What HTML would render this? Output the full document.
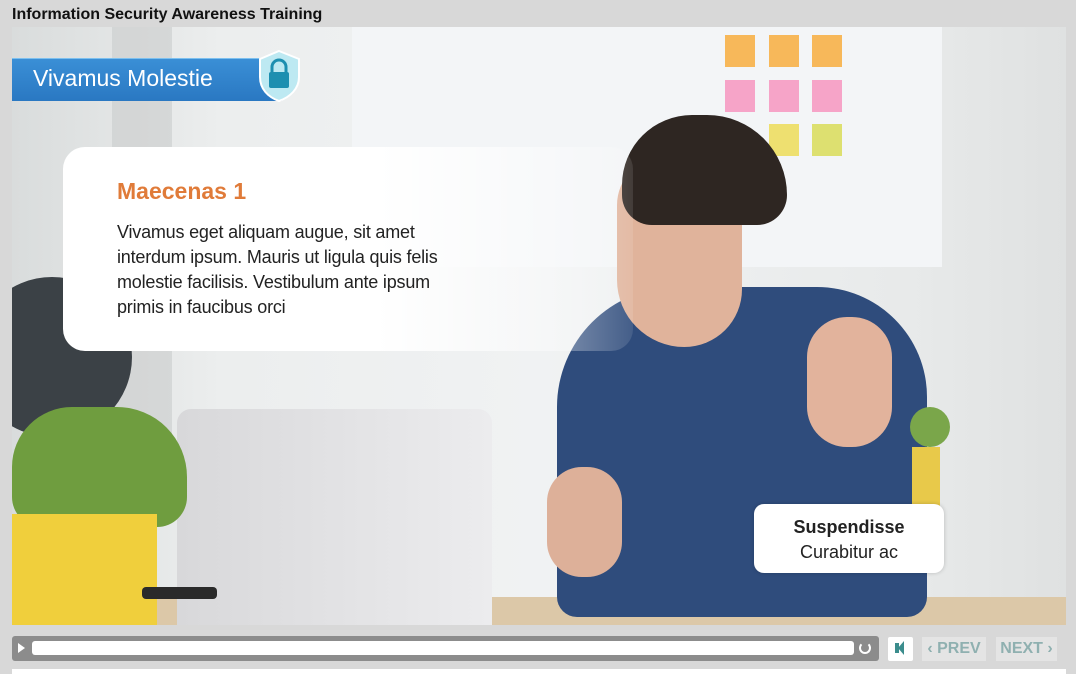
<!DOCTYPE html>
<html><head><style>
*{margin:0;padding:0;box-sizing:border-box}
body{width:1076px;height:674px;background:#d8d8d8;position:relative;overflow:hidden;font-family:"Liberation Sans",sans-serif}
.a{position:absolute}
</style></head><body>
<div class="a" style="left:12px;top:6px;font-size:16px;font-weight:bold;color:#111">Information Security Awareness Training</div>
<div class="a" style="left:12px;top:27px;width:1054px;height:598px;overflow:hidden;background:linear-gradient(90deg,#d9dcdc 0%,#eceeee 20%,#f0f2f3 50%,#e8eaea 85%,#dfe1e1 100%)">
 <div class="a" style="left:340px;top:0;width:590px;height:240px;background:#f3f5f7"></div>
 <div class="a" style="left:100px;top:0;width:60px;height:440px;background:#c9cccc;opacity:.6"></div>
 <div class="a" style="left:713px;top:8px;width:30px;height:32px;background:#f7b85a"></div>
 <div class="a" style="left:757px;top:8px;width:30px;height:32px;background:#f7b85a"></div>
 <div class="a" style="left:800px;top:8px;width:30px;height:32px;background:#f7b85a"></div>
 <div class="a" style="left:713px;top:53px;width:30px;height:32px;background:#f6a4c8"></div>
 <div class="a" style="left:757px;top:53px;width:30px;height:32px;background:#f6a4c8"></div>
 <div class="a" style="left:800px;top:53px;width:30px;height:32px;background:#f6a4c8"></div>
 <div class="a" style="left:757px;top:97px;width:30px;height:32px;background:#eee070"></div>
 <div class="a" style="left:800px;top:97px;width:30px;height:32px;background:#dde070"></div>
 <div class="a" style="left:-40px;top:250px;width:160px;height:160px;border-radius:50%;background:#3b4146"></div>
 <div class="a" style="left:0;top:570px;width:1054px;height:28px;background:#dcc8a8"></div>
 <div class="a" style="left:545px;top:260px;width:370px;height:330px;background:#2f4c7c;border-radius:120px 110px 20px 20px"></div>
 <div class="a" style="left:795px;top:290px;width:85px;height:130px;background:#e2b39c;border-radius:40px"></div>
 <div class="a" style="left:535px;top:440px;width:75px;height:110px;background:#ddb099;border-radius:35px"></div>
 <div class="a" style="left:605px;top:130px;width:125px;height:190px;background:#e0b39b;border-radius:50px 60px 60px 70px"></div>
 <div class="a" style="left:610px;top:88px;width:165px;height:110px;background:#2e2622;border-radius:70px 80px 30px 30px"></div>
 <div class="a" style="left:898px;top:380px;width:40px;height:40px;background:#7aa64a;border-radius:50%"></div>
 <div class="a" style="left:900px;top:420px;width:28px;height:60px;background:#e8c94a"></div>
 <div class="a" style="left:165px;top:382px;width:315px;height:216px;background:linear-gradient(90deg,#d8d8da,#ececee);border-radius:14px 14px 0 0"></div>
 <div class="a" style="left:0px;top:380px;width:175px;height:120px;background:#6f9d3f;border-radius:60px 70px 30px 30px"></div>
 <div class="a" style="left:0px;top:487px;width:145px;height:111px;background:#f0cf3c"></div>
 <div class="a" style="left:130px;top:560px;width:75px;height:12px;background:#2a2a2a;border-radius:4px"></div>
 <div class="a" style="left:0;top:31px;width:270px;height:43px;background:linear-gradient(180deg,#3a8fd6,#2a78c2);border-top:1px solid #7cc0ef"></div>
 <div class="a" style="left:21px;top:38px;color:#fff;font-size:23px">Vivamus Molestie</div>
 <svg class="a" style="left:245px;top:22px" width="45" height="54" viewBox="0 0 45 54"><path d="M22 2 L42 10 V28 C42 40 33 48 22 52 C11 48 3 40 3 28 V10 Z" fill="#bde9f2" stroke="#fff" stroke-width="2"/><path d="M15 23 V18 a7 7 0 0 1 14 0 V23" fill="none" stroke="#1d8fb0" stroke-width="3"/><rect x="12" y="23" width="20" height="16" rx="2" fill="#1d8fb0"/></svg>
 <div class="a" style="left:51px;top:120px;width:570px;height:204px;border-radius:22px;background:linear-gradient(90deg,#fff 0%,#fff 55%,rgba(255,255,255,.1) 100%)"></div>
 <div class="a" style="left:105px;top:151px;color:#e07b39;font-size:23px;font-weight:bold">Maecenas 1</div>
 <div class="a" style="left:105px;top:193px;width:362px;color:#222;font-size:18px;line-height:25px;letter-spacing:-0.2px">Vivamus eget aliquam augue, sit amet interdum ipsum. Mauris ut ligula quis felis molestie facilisis. Vestibulum ante ipsum primis in faucibus orci</div>
 <div class="a" style="left:742px;top:477px;width:190px;height:69px;border-radius:10px;background:#fff;box-shadow:0 0 4px rgba(0,0,0,.2);text-align:center;font-size:18px;color:#222;padding-top:11px;line-height:25px"><b>Suspendisse</b><br>Curabitur ac</div>
</div>
<div class="a" style="left:12px;top:636px;width:867px;height:25px;background:#8c8c8c;border-radius:3px"></div>
<div class="a" style="left:18px;top:643px;width:0;height:0;border-left:7px solid #fff;border-top:5px solid transparent;border-bottom:5px solid transparent"></div>
<div class="a" style="left:32px;top:641px;width:822px;height:14px;background:#fff;border-radius:3px"></div>
<div class="a" style="left:859px;top:642px;width:12px;height:12px;border:2px solid #fff;border-radius:50%;border-top-color:transparent"></div>
<div class="a" style="left:888px;top:637px;width:25px;height:24px;background:#fff;border-radius:2px"></div>
<div class="a" style="left:895px;top:643px;width:4px;height:10px;background:#3b8d8d"></div>
<div class="a" style="left:898px;top:641px;width:0;height:0;border-right:6px solid #3b8d8d;border-top:7px solid transparent;border-bottom:7px solid transparent"></div>
<div class="a" style="left:922px;top:637px;width:64px;height:24px;background:#e4e4e4;color:#8fb0b0;font-weight:bold;font-size:16px;line-height:24px;text-align:center">‹ PREV</div>
<div class="a" style="left:996px;top:637px;width:61px;height:24px;background:#e4e4e4;color:#8fb0b0;font-weight:bold;font-size:16px;line-height:24px;text-align:center">NEXT ›</div>
<div class="a" style="left:12px;top:669px;width:1054px;height:5px;background:#fff"></div>
</body></html>
